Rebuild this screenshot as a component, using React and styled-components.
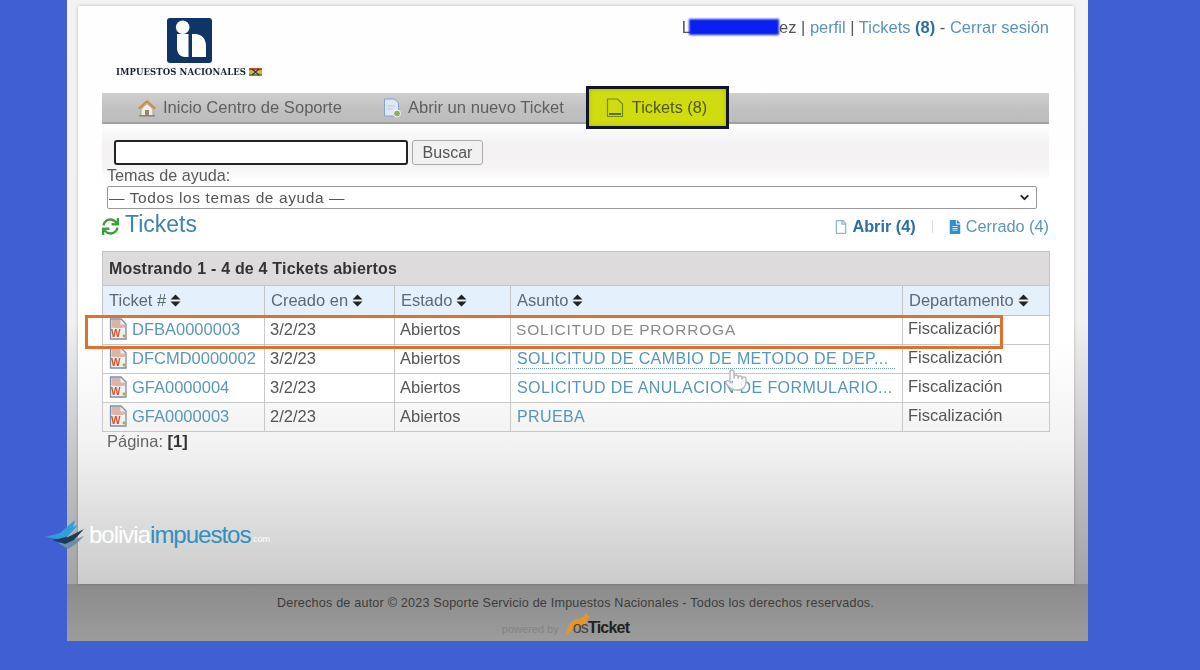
import React from "react";
import styled, { createGlobalStyle } from "styled-components";
import { FaSync, FaRegFile, FaFileAlt } from "react-icons/fa";
import { Pointer, ChevronDown } from "lucide-react";

const Global = createGlobalStyle`
  html, body { margin: 0; padding: 0; background: #3f5fd2; }
  body { width: 1200px; height: 670px; overflow: hidden; font-family: "Liberation Sans", Arial, sans-serif; }
`;

const Stage = styled.div`
  position: relative;
  width: 1021px;
  height: 641px;
  margin-left: 67px;
  padding: 6px 14px 0 11px;
  box-sizing: border-box;
  background: linear-gradient(#f3f3f3 0, #f1f1f1 50%, #c4c4c4 72%, #a8a8a8 88%, #9a9a9a 100%);
  display: flex;
  flex-direction: column;
`;

const Sheet = styled.main`
  height: 578px;
  box-sizing: border-box;
  padding: 0 25px 0 24px;
  background: linear-gradient(#fefefe 0, #ffffff 58%, #f2f2f2 76%, #cbcbcb 100%);
  box-shadow: 0 0 3px rgba(0, 0, 0, 0.25);
  display: flex;
  flex-direction: column;
  color: #444;
  filter: blur(0.3px);
`;

const Header = styled.header`
  height: 87px;
  display: flex;
  justify-content: space-between;
`;

const Brand = styled.div`
  width: 146px;
  margin: 12px 0 0 14px;
  display: flex;
  flex-direction: column;
  align-items: center;
  gap: 4px;
`;

const BrandLine = styled.div`
  display: flex;
  align-items: center;
  gap: 3px;
  font: 700 8.5px "DejaVu Serif", serif;
  letter-spacing: 0.1px;
  color: #1b2333;
  white-space: nowrap;
`;

const UserLine = styled.div`
  margin-top: 12px;
  height: 18px;
  font-size: 16.5px;
  color: #555;
  white-space: nowrap;
`;

const UserLink = styled.span`
  color: #5a93b7;
`;

const Count = styled.b`
  color: #2d6f9e;
`;

const Redaction = styled.span`
  display: inline-block;
  width: 90px;
  height: 16px;
  margin-left: -2px;
  vertical-align: -2px;
  background: #0a1ff0;
  filter: blur(0.8px);
`;

const Nav = styled.nav`
  height: 31px;
  box-sizing: border-box;
  padding-left: 35px;
  display: flex;
  align-items: center;
  background: linear-gradient(#d0cfcf, #c3c2c2 50%, #bdbcbc);
  border-bottom: 2px solid #a3a2a2;
  font-size: 16.6px;
  color: #5f5f5f;
`;

const NavItem = styled.a`
  display: flex;
  align-items: center;
  gap: 6px;
  margin-right: ${(p) => p.$gap}px;
  white-space: nowrap;
`;

const ActiveTab = styled.a`
  position: relative;
  z-index: 1;
  width: 143px;
  height: 43px;
  box-sizing: border-box;
  padding-left: 17px;
  display: flex;
  align-items: center;
  gap: 8px;
  border: 3px solid #14142a;
  background: #d0dc10;
  box-shadow: inset 0 0 4px #a9b80c;
  color: #4d5a10;
  font-size: 16.3px;
  white-space: nowrap;
`;

const SearchPanel = styled.section`
  height: 54px;
  padding: 16px 0 0;
  box-sizing: border-box;
  background: linear-gradient(#fff, #f3f1f2 40%, #f5f3f4 80%, #fdfdfd);
`;

const SearchRow = styled.form`
  display: flex;
  gap: 4px;
  margin-left: 12px;
`;

const SearchInput = styled.input`
  width: 294px;
  height: 25px;
  box-sizing: border-box;
  border: 2px solid #222;
  border-radius: 3px;
  background: #fff;
`;

const SearchButton = styled.button`
  width: 71px;
  height: 25px;
  padding: 0;
  box-sizing: border-box;
  border: 1px solid #aaa;
  border-radius: 3px;
  background: #f1f1f1;
  color: #555;
  font: 16px "Liberation Sans", sans-serif;
`;

const Label = styled.label`
  display: block;
  margin-left: 5px;
  height: 8px;
  line-height: 20px;
  font-size: 16.2px;
  color: #5a5a5a;
`;

const SelectWrap = styled.div`
  position: relative;
  width: 930px;
  margin: 8px 0 0 5px;
  svg { position: absolute; right: 6px; top: 5px; color: #222; pointer-events: none; }
`;

const TopicSelect = styled.select`
  appearance: none;
  display: block;
  width: 100%;
  height: 23px;
  padding: 0 0 0 1px;
  border: 1px solid #999;
  border-radius: 2px;
  background: #fff;
  color: #555;
  font: 15.5px/21px "Liberation Sans", sans-serif;
  letter-spacing: 0.6px;
`;

const TitleRow = styled.div`
  height: 42px;
  display: flex;
  align-items: flex-start;
  justify-content: space-between;
`;

const Title = styled.h1`
  margin: 3px 0 0;
  display: flex;
  align-items: center;
  gap: 6px;
  font-size: 23px;
  font-weight: 400;
  line-height: 25px;
  color: #3f83ad;
  svg { color: #3a9f3a; font-size: 17px; margin-top: 3px; }
`;

const Filters = styled.div`
  margin-top: 8px;
  display: flex;
  align-items: center;
  font-size: 16.3px;
`;

const Filter = styled.span`
  display: flex;
  align-items: center;
  gap: 4px;
  font-weight: ${(p) => (p.$on ? 700 : 400)};
  color: ${(p) => (p.$on ? "#2d6f9e" : "#5a95ba")};
  svg { color: ${(p) => (p.$on ? "#8ab6cf" : "#2f8fcf")}; font-size: 14px; }
`;

const Divider = styled.span`
  width: 1px;
  height: 13px;
  margin: 0 15px 0 16px;
  background: #ddd;
`;

const Table = styled.table`
  width: 947px;
  border-collapse: collapse;
  table-layout: fixed;
  font-size: 16.5px;
`;

const Caption = styled.th`
  height: 34px;
  padding: 0 0 0 6px;
  box-sizing: border-box;
  background: #dddbdc;
  border: 1px solid #c4c4c4;
  text-align: left;
  font-size: 16px;
  letter-spacing: 0.2px;
  color: #333;
`;

const Head = styled.th`
  height: 30px;
  padding: 0 0 0 6px;
  box-sizing: border-box;
  background: #e4f0fb;
  border: 1px solid #c4c4c4;
  text-align: left;
  font-weight: 400;
  color: #5c6a72;
  white-space: nowrap;
`;

const Cell = styled.td`
  height: 29px;
  padding: 0 0 ${(p) => (p.$last ? 3 : 2)}px 5px;
  box-sizing: border-box;
  background: ${(p) => (p.$dim ? "transparent" : "#fff")};
  border: 1px solid #c8c8c8;
  color: #555;
  white-space: nowrap;
  overflow: hidden;
`;

const TicketLink = styled.span`
  display: flex;
  align-items: center;
  gap: 4px;
  padding-left: 1px;
  color: #5a97bb;
`;

const Subject = styled.div`
  width: 378px;
  margin-left: ${(p) => (p.$plain ? 0 : 1)}px;
  white-space: nowrap;
  line-height: 19px;
  color: ${(p) => (p.$plain ? "#8a8a8a" : "#5596bc")};
  font-size: ${(p) => (p.$plain ? 15.5 : 16)}px;
  letter-spacing: ${(p) => (p.$plain ? 0.8 : 0.4)}px;
  border-bottom: ${(p) => (p.$hover ? "1px dotted #6f9fc0" : "0")};
  margin-bottom: ${(p) => (p.$hover ? -1 : 0)}px;
`;

const Pager = styled.div`
  margin: 0 0 0 5px;
  font-size: 16.5px;
  color: #666;
  b { color: #333; }
`;

const Footer = styled.footer`
  height: 57px;
  padding: 12px 4px 0 0;
  box-sizing: border-box;
  display: flex;
  flex-direction: column;
  align-items: center;
  gap: 1px;
  background: linear-gradient(#8b8b8b, #9c9c9c);
  margin: 0 -14px 0 -11px;
  color: #3c3c3c;
  font-size: 12.6px;
  letter-spacing: 0.2px;
`;

const Powered = styled.div`
  display: flex;
  align-items: flex-end;
  margin-right: 20px;
  font-size: 11px;
  color: #858585;
  letter-spacing: 0;
`;

const KangarooSlot = styled.span`
  display: flex;
  margin-left: 6px;
`;

const OsText = styled.span`
  font-size: 16px;
  font-weight: 700;
  letter-spacing: -0.8px;
  color: #222;
  margin-left: -18px;
  line-height: 15px;
`;

const OsLight = styled.span`
  font-weight: 400;
  color: #444;
`;

const Highlight = styled.div`
  position: absolute;
  left: 18px;
  top: 315px;
  width: 918px;
  height: 34px;
  box-sizing: border-box;
  border: 3px solid #e0702f;
  pointer-events: none;
`;

const HandCursor = styled.div`
  position: absolute;
  left: 657px;
  top: 368px;
  color: #b9b9b9;
  svg { fill: rgba(255, 255, 255, 0.85); display: block; }
`;

const Watermark = styled.div`
  position: absolute;
  left: -23px;
  top: 519px;
  display: flex;
  align-items: center;
  gap: 5px;
  font-size: 24px;
  letter-spacing: -1px;
  white-space: nowrap;
  color: #fff;
`;

const WmBlue = styled.span`
  color: #2f8fc0;
`;

const WmCom = styled.small`
  font-size: 9px;
  letter-spacing: 0;
  color: #fff;
  align-self: flex-end;
  margin: 0 0 6px -5px;
`;

const Sort = () => (
  <svg width="11" height="13" viewBox="0 0 11 13" style={{ marginLeft: 4, verticalAlign: -1 }}>
    <path d="M5.500 0.500 10.500 5.500H.5ZM.5 7.500H10.500L5.500 12.500Z" fill="#222" />
  </svg>
);

const Logo = () => (
  <svg width="45" height="45" viewBox="0 0 45 45">
    <rect width="45" height="45" rx="3" fill="#0e3565" />
    <circle cx="15.700" cy="9.300" r="6.800" fill="#fff" />
    <path d="M10 16H21.500V39H18C13 39 10 35 10 30Z" fill="#fff" />
    <path d="M25 16H28C35 16 39 21 39 28V39H25Z" fill="#fff" />
  </svg>
);

const Flag = () => (
  <svg width="13" height="8" viewBox="0 0 13 8">
    <rect width="13" height="2.700" fill="#c0503a" />
    <rect y="2.700" width="13" height="2.700" fill="#dcc22a" />
    <rect y="5.400" width="13" height="2.600" fill="#5a9a4a" />
    <path d="M3 1 10 7M10 1 3 7" stroke="#333" strokeWidth="1.100" />
  </svg>
);

const HomeIcon = () => (
  <svg width="20" height="18" viewBox="0 0 20 18">
    <path d="M1 9 10 1l9 8-1.500 1.300L10 3.500 2.500 10.300Z" fill="#c98a3a" />
    <path d="M4 10 10 4.500 16 10v7H4Z" fill="#f3eee0" stroke="#a9a08a" />
    <rect x="8" y="11" width="4" height="6" fill="#8f8a7a" />
    <rect x="2" y="16" width="16" height="1.500" fill="#8a8678" />
  </svg>
);

const NewTicketIcon = () => (
  <svg width="20" height="20" viewBox="0 0 20 20">
    <path d="M2.500 1h10l4 4v13h-14Z" fill="#dfe9f6" stroke="#7ea3cf" />
    <path d="M5 8h8M5 11h6" stroke="#b4c8e2" />
    <circle cx="15" cy="15.500" r="3.500" fill="#8cb15a" stroke="#fff" />
  </svg>
);

const TabIcon = () => (
  <svg width="18" height="20" viewBox="0 0 18 20">
    <path d="M1.500 1h10l5 5v12.500h-15Z" fill="#d0dc10" stroke="#6d8a1e" strokeWidth="1.200" />
    <rect x="3" y="15" width="12" height="2" fill="#56701a" />
  </svg>
);

const DocIcon = () => (
  <svg width="19" height="22" viewBox="0 0 19 22" style={{ flex: "none" }}>
    <path d="M1.500 1h10.500l5 5v15h-15.500Z" fill="#eef0f3" stroke="#7d8ea8" strokeWidth="1.300" />
    <path d="M2.500 2h9v4.500h4.500v3c-5 1-9 1-13.500 0Z" fill="#d8b4ab" />
    <text x="2" y="19" fontSize="10" fontWeight="700" fill="#dc4f22" fontFamily="Liberation Sans">W</text>
    <circle cx="15" cy="18" r="1.400" fill="#b9a52a" />
  </svg>
);

const Kangaroo = () => (
  <svg width="26" height="24" viewBox="0 0 26 24">
    <path d="M1 23C3 15 6 9 12 8c3-.5 7-1 9-6 1 2 2 3 4 4l-3 3c-1 4-4 6-8 6-3 1-8 4-11 9Z" fill="#e5962a" />
  </svg>
);

const BookMark = () => (
  <svg width="40" height="31" viewBox="0 0 40 31" style={{ flex: "none" }}>
    <path d="M14 24 30 21 40 17 32 25 24 30Z" fill="#6c8ea8" />
    <path d="M8 21 24 18 40 10 30 21 21 25Z" fill="#1f3b57" />
    <path d="M1 18 16 14 31 1 29 8 34 6 24 17 14 20Z" fill="#2f9fdc" />
  </svg>
);

const rows = [
  { id: "DFBA0000003", date: "3/2/23", subject: "SOLICITUD DE PRORROGA", plain: true },
  { id: "DFCMD0000002", date: "3/2/23", subject: "SOLICITUD DE CAMBIO DE METODO DE DEP...", hover: true },
  { id: "GFA0000004", date: "3/2/23", subject: "SOLICITUD DE ANULACION DE FORMULARIO..." },
  { id: "GFA0000003", date: "2/2/23", subject: "PRUEBA", dim: true },
];

const heads = ["Ticket #", "Creado en", "Estado", "Asunto", "Departamento"];
const widths = [162, 130, 116, 392, 147];

export default function App() {
  return (
    <>
      <Global />
      <Stage>
        <Sheet>
          <Header>
            <Brand>
              <Logo />
              <BrandLine>
                IMPUESTOS NACIONALES <Flag />
              </BrandLine>
            </Brand>
            <UserLine>
              L<Redaction />ez | <UserLink>perfil</UserLink> | <UserLink>Tickets</UserLink> <Count>(8)</Count> -{" "}
              <UserLink>Cerrar sesión</UserLink>
            </UserLine>
          </Header>
          <Nav>
            <NavItem $gap={40}>
              <HomeIcon />
              Inicio Centro de Soporte
            </NavItem>
            <NavItem $gap={22}>
              <NewTicketIcon />
              Abrir un nuevo Ticket
            </NavItem>
            <ActiveTab>
              <TabIcon />
              Tickets (8)
            </ActiveTab>
          </Nav>
          <SearchPanel>
            <SearchRow>
              <SearchInput />
              <SearchButton type="button">Buscar</SearchButton>
            </SearchRow>
            <Label>Temas de ayuda:</Label>
          </SearchPanel>
          <SelectWrap>
            <TopicSelect defaultValue="all">
              <option value="all">— Todos los temas de ayuda —</option>
            </TopicSelect>
            <ChevronDown size={13} strokeWidth={3.5} />
          </SelectWrap>
          <TitleRow>
            <Title>
              <FaSync />
              Tickets
            </Title>
            <Filters>
              <Filter $on>
                <FaRegFile />
                Abrir (4)
              </Filter>
              <Divider />
              <Filter>
                <FaFileAlt />
                Cerrado (4)
              </Filter>
            </Filters>
          </TitleRow>
          <Table>
            <colgroup>
              {widths.map((w) => (
                <col key={w} width={w} />
              ))}
            </colgroup>
            <thead>
              <tr>
                <Caption colSpan={5}>Mostrando 1 - 4 de 4 Tickets abiertos</Caption>
              </tr>
              <tr>
                {heads.map((h) => (
                  <Head key={h}>
                    {h}
                    <Sort />
                  </Head>
                ))}
              </tr>
            </thead>
            <tbody>
              {rows.map((r) => (
                <tr key={r.id}>
                  <Cell $dim={r.dim}>
                    <TicketLink>
                      <DocIcon />
                      {r.id}
                    </TicketLink>
                  </Cell>
                  <Cell $dim={r.dim}>{r.date}</Cell>
                  <Cell $dim={r.dim}>Abiertos</Cell>
                  <Cell $dim={r.dim}>
                    <Subject $plain={r.plain} $hover={r.hover}>
                      {r.subject}
                    </Subject>
                  </Cell>
                  <Cell $dim={r.dim} $last>
                    Fiscalización
                  </Cell>
                </tr>
              ))}
            </tbody>
          </Table>
          <Pager>
            Página: <b>[1]</b>
          </Pager>
        </Sheet>
        <Footer>
          <div>Derechos de autor © 2023 Soporte Servicio de Impuestos Nacionales - Todos los derechos reservados.</div>
          <Powered>
            powered by
            <KangarooSlot>
              <Kangaroo />
            </KangarooSlot>
            <OsText>
              <OsLight>os</OsLight>Ticket
            </OsText>
          </Powered>
        </Footer>
        <Highlight />
        <HandCursor>
          <Pointer size={24} strokeWidth={1.4} />
        </HandCursor>
        <Watermark>
          <BookMark />
          <span>
            bolivia<WmBlue>impuestos</WmBlue>
          </span>
          <WmCom>.com</WmCom>
        </Watermark>
      </Stage>
    </>
  );
}
